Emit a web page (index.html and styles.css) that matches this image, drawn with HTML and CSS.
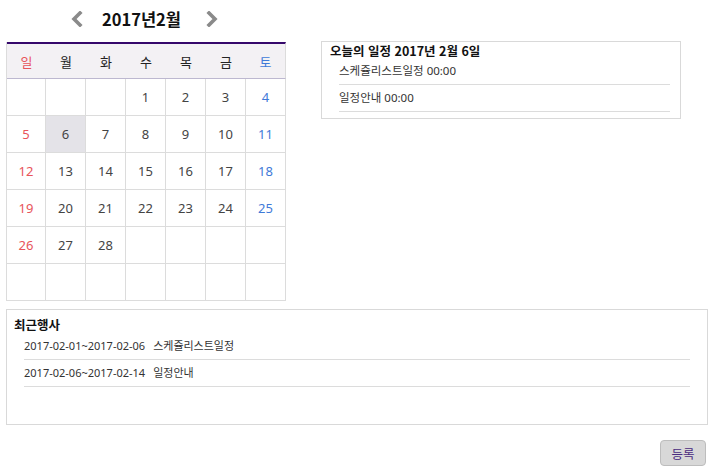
FILE: index.html
```html
<!DOCTYPE html>
<html lang="ko">
<head>
<meta charset="utf-8">
<link rel="stylesheet" href="styles.css">
</head>
<body>
<div class="page">
  <div class="top">
    <div class="cal-wrap">
      <div class="cal-head">
        <svg class="arrow" width="12" height="16" viewBox="0 0 12 16"><polyline points="9,2 3,8 9,14" fill="none" stroke="#8a8a8a" stroke-width="3.6" stroke-linecap="square" stroke-linejoin="miter"/></svg>
        <span class="month">2017년2월</span>
        <svg class="arrow" width="12" height="16" viewBox="0 0 12 16"><polyline points="3,2 9,8 3,14" fill="none" stroke="#8a8a8a" stroke-width="3.6" stroke-linecap="square" stroke-linejoin="miter"/></svg>
      </div>
      <div class="cal">
        <div class="dow sun">일</div><div class="dow">월</div><div class="dow">화</div><div class="dow">수</div><div class="dow">목</div><div class="dow">금</div><div class="dow sat">토</div>
        <div class="d"></div><div class="d"></div><div class="d"></div><div class="d">1</div><div class="d">2</div><div class="d">3</div><div class="d sat">4</div>
        <div class="d sun">5</div><div class="d today">6</div><div class="d">7</div><div class="d">8</div><div class="d">9</div><div class="d">10</div><div class="d sat">11</div>
        <div class="d sun">12</div><div class="d">13</div><div class="d">14</div><div class="d">15</div><div class="d">16</div><div class="d">17</div><div class="d sat">18</div>
        <div class="d sun">19</div><div class="d">20</div><div class="d">21</div><div class="d">22</div><div class="d">23</div><div class="d">24</div><div class="d sat">25</div>
        <div class="d sun">26</div><div class="d">27</div><div class="d">28</div><div class="d"></div><div class="d"></div><div class="d"></div><div class="d"></div>
        <div class="d"></div><div class="d"></div><div class="d"></div><div class="d"></div><div class="d"></div><div class="d"></div><div class="d"></div>
      </div>
    </div>
    <div class="today-box">
      <div class="box-title">오늘의 일정 2017년 2월 6일</div>
      <ul class="today-list">
        <li>스케쥴리스트일정 00:00</li>
        <li>일정안내 00:00</li>
      </ul>
    </div>
  </div>
  <div class="recent">
    <div class="box-title">최근행사</div>
    <ul class="recent-list">
      <li><span class="range">2017-02-01~2017-02-06</span>스케쥴리스트일정</li>
      <li><span class="range">2017-02-06~2017-02-14</span>일정안내</li>
    </ul>
  </div>
  <div class="actions">
    <button class="btn">등록</button>
  </div>
</div>
</body>
</html>
```
FILE: styles.css
```css
* { box-sizing: border-box; }
html, body { margin: 0; padding: 0; background: #fff; }
body {
  font-family: "Noto Sans", "Noto Sans CJK KR", sans-serif;
  color: #333;
}
.page { padding: 0 6px 0 6px; width: 714px; }
.top { display: flex; align-items: flex-start; }
.cal-wrap { width: 280px; }
.cal-head {
  height: 42px;
  display: flex;
  align-items: center;
  padding-left: 65px;
  padding-bottom: 4px;
}
.arrow { display: block; }
.month {
  font-family: "Noto Sans CJK KR", sans-serif;
  font-weight: bold;
  font-size: 16.5px;
  color: #111;
  margin: 0 25px 0 19px;
  line-height: 20px;
}
.cal {
  display: grid;
  grid-template-columns: 39px repeat(6, 40px);
  border-left: 1px solid #dcdcdc;
  width: 280px;
}
.dow {
  background: #f3f1f4;
  border-top: 2px solid #35086b;
  border-bottom: 1px solid #bdb8d0;
  height: 37px;
  display: flex; align-items: center; justify-content: center;
  font-family: "Noto Sans CJK KR", sans-serif;
  font-size: 13px;
  color: #222;
}
.dow.sat { border-right: 1px solid #dcdcdc; }
.d {
  height: 37px;
  border-right: 1px solid #dcdcdc;
  border-bottom: 1px solid #dcdcdc;
  display: flex; align-items: center; justify-content: center;
  font-size: 13px;
  color: #444;
}
.sun { color: #e8545a; }
.sat { color: #3f7ad8; }
.today { background: #e4e3e8; }
.today-box {
  margin-left: 35px;
  margin-top: 41px;
  width: 360px;
  height: 78px;
  border: 1px solid #d9d9d9;
  padding: 1px 10px 0 8px;
}
.box-title {
  font-family: "Noto Sans CJK KR", sans-serif;
  font-weight: bold;
  font-size: 12.5px;
  color: #111;
  line-height: 16px;
}
ul { list-style: none; margin: 0; padding: 0; }
.today-list { margin-left: 9px; }
.today-list li, .recent-list li {
  font-size: 11.5px;
  color: #333;
  border-bottom: 1px solid #dcdcdc;
  height: 27px;
  line-height: 26px;
}
.recent-list li { font-size: 11px; }
.today-list li:first-child { height: 26px; line-height: 24px; }
.recent {
  margin-top: 8px;
  width: 702px;
  height: 116px;
  border: 1px solid #d9d9d9;
  padding: 7px 17px 0 7px;
}
.recent-list { margin-left: 10px; }
.recent-list li:first-child { height: 27px; line-height: 25px; }
.range { margin-right: 8px; }
.actions { display: flex; justify-content: flex-end; padding-top: 15px; padding-right: 2px; }
.btn {
  width: 46px; height: 26px;
  background: #d8d8d8;
  border: 1px solid #bdbdbd;
  border-radius: 4px;
  font-family: "Noto Sans CJK KR", sans-serif;
  font-size: 12.5px;
  color: #4a2a80;
  padding: 0;
}
```
